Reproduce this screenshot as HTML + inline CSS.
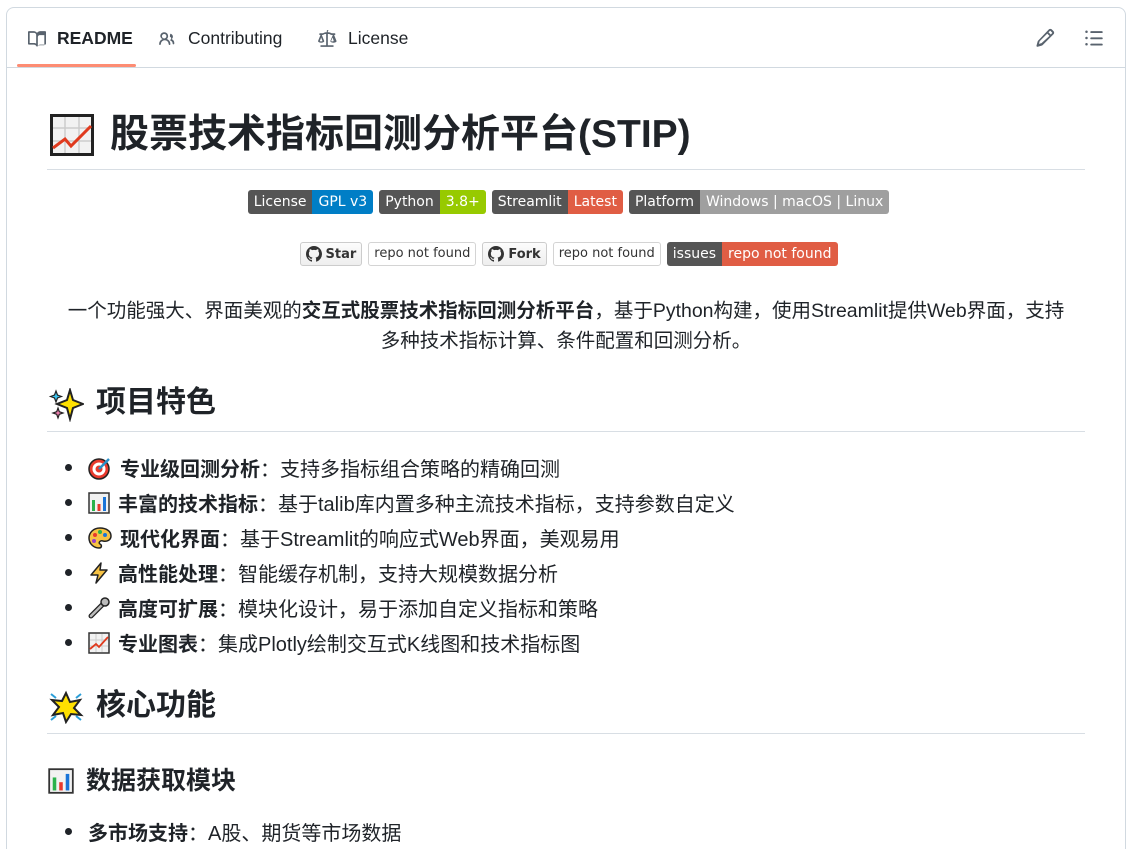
<!DOCTYPE html>
<html><head><meta charset="utf-8"><style>
*{margin:0;padding:0;box-sizing:border-box}
html,body{width:1137px;height:849px;overflow:hidden}
body{background:#fff;font-family:"Liberation Sans","Noto Sans CJK SC",sans-serif;color:#1f2328;position:relative}
.box{position:absolute;left:6px;top:7px;width:1120px;height:842px;border:1px solid #d1d9e0;border-bottom:none;border-radius:8px 8px 0 0}
.tabs{position:absolute;left:6px;top:7px;width:1120px;height:61px;border-bottom:1px solid #d1d9e0}
.tab{position:absolute;top:28px;font-size:17.5px;display:flex;align-items:center;gap:10px;color:#1f2328}
.ul{position:absolute;left:17px;top:64px;width:119px;height:3px;background:#fd8c73;border-radius:2px}
.a{position:absolute;white-space:nowrap}
.hr{position:absolute;left:47px;width:1038px;height:1px;background:#d8dee4}
h1,h2,h3{font-weight:700}
.badges{position:absolute;left:0;width:1137px;display:flex;justify-content:center;gap:6px;font-family:"DejaVu Sans","Liberation Sans",sans-serif;font-size:14px;color:#fff}
.b{display:flex;height:24px;border-radius:3px;overflow:hidden}
.b span{padding:0 6px;line-height:24px}
.g{background:#555}
.gh{display:flex;height:24px;font-size:13px;color:#333;font-weight:700;align-items:center}
.gh .l{border:1px solid #ccc;border-radius:3px;background:linear-gradient(#fcfcfc,#eee);height:24px;padding:0 5px;display:flex;align-items:center;gap:4px}
.gh .r{border:1px solid #d4d4d4;border-radius:3px;background:#fff;height:24px;padding:0 5px;line-height:22px;margin-left:6px;font-weight:400}
p.c{position:absolute;left:52px;width:1028px;text-align:center;font-size:19.5px;line-height:30px}
.li{position:absolute;left:65px;font-size:20px;display:flex;align-items:center;white-space:nowrap}
.li:before{content:"";width:7px;height:7px;border-radius:50%;background:#1f2328;margin-right:16px}
.li svg{margin-right:8px}
</style></head><body>
<div class="box"></div>
<div class="tabs"></div>
<div class="tab" style="left:27px;font-weight:700"><svg width="20" height="18" viewBox="0 0 16 16" fill="#59636e"><path d="M0 1.75A.75.75 0 0 1 .75 1h4.25c1.2 0 2.3.6 3 1.5C8.7 1.6 9.8 1 11 1h4.250a.75.75 0 0 1 .75.75v10.5a.75.75 0 0 1-.75.75H10.8c-.9 0-1.7.5-2.1 1.3a.75.75 0 0 1-1.3 0C7 13.5 6.1 13 5.2 13H.75A.75.75 0 0 1 0 12.25Zm7.25 2.5c0-1-.8-1.75-1.75-1.75H1.5v9h3.7c.8 0 1.5.2 2.050.6Zm1.5 9.85c.6-.4 1.3-.6 2.050-.6h3.7v-9H10.5c-1 0-1.75.8-1.75 1.75Z"/></svg>README</div>
<div class="tab" style="left:156px"><svg width="22" height="18" viewBox="0 0 16 16" fill="#59636e"><path d="M2 5.5a3.5 3.5 0 1 1 5.9 2.5 5 5 0 0 1 3.1 4.5.75.75 0 0 1-1.5.1 3.5 3.5 0 0 0-7 0 .75.75 0 0 1-1.5-.1 5 5 0 0 1 3.1-4.5A3.5 3.5 0 0 1 2 5.5ZM5.5 3.5a2 2 0 1 0 0 4 2 2 0 0 0 0-4Zm5.3.3a.75.75 0 0 1 1-.3 2.75 2.75 0 0 1 .4 4.6A4 4 0 0 1 14.5 12a.75.75 0 0 1-1.5 0 2.5 2.5 0 0 0-1.6-2.3.75.75 0 0 1-.2-1.3 1.25 1.25 0 0 0-.3-2.2.75.75 0 0 1-.3-1Z"/></svg>Contributing</div>
<div class="tab" style="left:316px"><svg width="22" height="18" viewBox="0 0 16 16" fill="#59636e"><path d="M8.75.75V2h.99c.3 0 .6.1.9.2l1.3.6c.1.1.2.1.3.1h2.5a.75.75 0 0 1 0 1.5h-.4l2.1 5.3a.75.75 0 0 1-.3.9c-.6.4-1.4.7-2.4.7s-1.8-.3-2.4-.7a.75.75 0 0 1-.3-.9l2.1-5.3H12.2c-.3 0-.6-.1-.9-.2L10 3.6c-.1-.1-.2-.1-.3-.1h-.95v10h4.5a.75.75 0 0 1 0 1.5H2.75a.75.75 0 0 1 0-1.5h4.5v-10h-.95c-.1 0-.2 0-.3.1l-1.3.6c-.3.1-.6.2-.9.2H3.4l2.1 5.3a.75.75 0 0 1-.3.9c-.6.4-1.4.7-2.4.7s-1.8-.3-2.4-.7a.75.75 0 0 1-.3-.9L2.2 4.4h-.4a.75.75 0 0 1 0-1.5h2.5c.1 0 .2 0 .3-.1l1.3-.6c.3-.1.6-.2.9-.2h.99V.75a.75.75 0 0 1 1.5 0ZM1.6 9.9c.3.1.6.2 1.2.2s.9-.1 1.2-.2L2.8 6.7Zm10 0c.3.1.6.2 1.2.2s.9-.1 1.2-.2L13 6.7Z"/></svg>License</div>
<div class="ul"></div>
<svg class="a" style="left:1035px;top:28px" width="20" height="20" viewBox="0 0 16 16" fill="#59636e"><path d="M11 1.2a1.75 1.75 0 0 1 2.5 0l1.3 1.3a1.75 1.75 0 0 1 0 2.5l-8.6 8.6c-.2.2-.5.4-.8.5l-3.3.9a.75.75 0 0 1-.9-.9l.9-3.3c.1-.3.3-.6.5-.8Zm1.4 1.1a.25.25 0 0 0-.4 0L10.8 3.4l1.8 1.8 1.1-1.1a.25.25 0 0 0 0-.4ZM11.6 6.3 9.8 4.5 3.8 10.5c-.03.03-.05.07-.06.1l-.6 2.1 2.1-.6.1-.06Z"/></svg>
<svg class="a" style="left:1084px;top:28px" width="20" height="20" viewBox="0 0 16 16" fill="#59636e"><path d="M5.75 2.5h8.5a.75.75 0 0 1 0 1.5h-8.5a.75.75 0 0 1 0-1.5Zm0 5h8.5a.75.75 0 0 1 0 1.5h-8.5a.75.75 0 0 1 0-1.5Zm0 5h8.5a.75.75 0 0 1 0 1.5h-8.5a.75.75 0 0 1 0-1.5ZM2 14a1 1 0 1 1 0-2 1 1 0 0 1 0 2Zm1-6a1 1 0 1 1-2 0 1 1 0 0 1 2 0ZM2 4a1 1 0 1 1 0-2 1 1 0 0 1 0 2Z"/></svg>

<svg class="a" style="left:50px;top:114px" width="44" height="42" viewBox="0 0 44 42"><rect x="1.5" y="1.5" width="41" height="39" fill="#f2f2f2" stroke="#222" stroke-width="3"/><path d="M15 3v36M29 3v36M3 14h38M3 27h38" stroke="#ccc" stroke-width="1.5"/><path d="M3 34l12-9 6 7 20-20" stroke="#e03a1e" stroke-width="3" fill="none"/></svg>
<h1 class="a" style="left:110px;top:109px;font-size:39px;line-height:52px">股票技术指标回测分析平台(STIP)</h1>
<div class="hr" style="top:169px"></div>

<div class="badges" style="top:190px">
<div class="b"><span class="g">License</span><span style="background:#007ec6">GPL v3</span></div>
<div class="b"><span class="g">Python</span><span style="background:#97ca00">3.8+</span></div>
<div class="b"><span class="g">Streamlit</span><span style="background:#e05d44">Latest</span></div>
<div class="b"><span class="g">Platform</span><span style="background:#9f9f9f">Windows | macOS | Linux</span></div>
</div>
<div class="badges" style="top:242px">
<div class="gh"><div class="l"><svg width="16" height="16" viewBox="0 0 16 16" fill="#333"><path d="M8 0C3.6 0 0 3.6 0 8c0 3.5 2.3 6.5 5.5 7.6.4.1.5-.2.5-.4v-1.4c-2.2.5-2.7-1-2.7-1-.4-.9-.9-1.2-.9-1.2-.7-.5.1-.5.1-.5.8.1 1.2.8 1.2.8.7 1.2 1.9.9 2.3.7.1-.5.3-.9.5-1.1-1.8-.2-3.6-.9-3.6-4 0-.9.3-1.6.8-2.1-.1-.2-.4-1 .1-2.1 0 0 .7-.2 2.2.8a7.4 7.4 0 0 1 4 0c1.5-1 2.2-.8 2.2-.8.4 1.1.2 1.9.1 2.1.5.6.8 1.3.8 2.1 0 3.1-1.9 3.8-3.6 4 .3.3.6.8.6 1.5v2.2c0 .2.1.5.6.4A8 8 0 0 0 16 8c0-4.4-3.6-8-8-8Z"/></svg>Star</div><div class="r">repo not found</div></div>
<div class="gh"><div class="l"><svg width="16" height="16" viewBox="0 0 16 16" fill="#333"><path d="M8 0C3.6 0 0 3.6 0 8c0 3.5 2.3 6.5 5.5 7.6.4.1.5-.2.5-.4v-1.4c-2.2.5-2.7-1-2.7-1-.4-.9-.9-1.2-.9-1.2-.7-.5.1-.5.1-.5.8.1 1.2.8 1.2.8.7 1.2 1.9.9 2.3.7.1-.5.3-.9.5-1.1-1.8-.2-3.6-.9-3.6-4 0-.9.3-1.6.8-2.1-.1-.2-.4-1 .1-2.1 0 0 .7-.2 2.2.8a7.4 7.4 0 0 1 4 0c1.5-1 2.2-.8 2.2-.8.4 1.1.2 1.9.1 2.1.5.6.8 1.3.8 2.1 0 3.1-1.9 3.8-3.6 4 .3.3.6.8.6 1.5v2.2c0 .2.1.5.6.4A8 8 0 0 0 16 8c0-4.4-3.6-8-8-8Z"/></svg>Fork</div><div class="r">repo not found</div></div>
<div class="b"><span class="g">issues</span><span style="background:#e05d44">repo not found</span></div>
</div>

<p class="c" style="top:296px">一个功能强大、界面美观的<b>交互式股票技术指标回测分析平台</b>，基于Python构建，使用Streamlit提供Web界面，支持<br>多种技术指标计算、条件配置和回测分析。</p>

<svg class="a" style="left:48px;top:388px" width="36" height="34" viewBox="0 0 36 34"><path d="M22 2l3 10 10 4-10 4-3 11-3-11-10-4 10-4z" fill="#ffe000" stroke="#222" stroke-width="2"/><path d="M8 3l1.5 4 4 1.5-4 1.5L8 14l-1.5-4-4-1.5 4-1.5z" fill="#3cc4f0" stroke="#222" stroke-width="1.2"/><path d="M10 20l1.3 3.7 3.7 1.3-3.7 1.3L10 30l-1.3-3.7-3.7-1.3 3.7-1.3z" fill="#f080b0" stroke="#222" stroke-width="1.2"/></svg>
<h2 class="a" style="left:96px;top:383px;font-size:30px;line-height:40px">项目特色</h2>
<div class="hr" style="top:431px"></div>

<div class="li" style="top:453px"><svg width="24" height="24" viewBox="0 0 24 24"><circle cx="11" cy="13" r="10" fill="#e8392d" stroke="#222" stroke-width="1.5"/><circle cx="11" cy="13" r="6.5" fill="#fff"/><circle cx="11" cy="13" r="3.5" fill="#e8392d"/><path d="M11 13L21 3" stroke="#2a8ec8" stroke-width="2.5"/></svg><b>专业级回测分析</b>：支持多指标组合策略的精确回测</div>
<div class="li" style="top:488px"><svg width="22" height="22" viewBox="0 0 22 22"><rect x="1" y="1" width="20" height="20" fill="#f2f2f2" stroke="#333" stroke-width="1.5"/><rect x="4" y="8" width="3" height="11" fill="#2bb24c"/><rect x="9.5" y="12" width="3" height="7" fill="#e8392d"/><rect x="15" y="5" width="3" height="14" fill="#1a74d8"/></svg><b>丰富的技术指标</b>：基于talib库内置多种主流技术指标，支持参数自定义</div>
<div class="li" style="top:523px"><svg width="24" height="22" viewBox="0 0 24 22"><path d="M12 1C5 1 1 6 1 11c0 6 5 10 10 10 3 0 3-3 1-4-2-1 0-4 3-3 4 1 8-1 8-5 0-5-5-8-11-8z" fill="#f6c244" stroke="#222" stroke-width="1.5"/><circle cx="7" cy="8" r="2" fill="#e8392d"/><circle cx="12" cy="5" r="2" fill="#2bb24c"/><circle cx="17" cy="8" r="2" fill="#1a74d8"/><circle cx="6" cy="14" r="2" fill="#9b3fc8"/></svg><b>现代化界面</b>：基于Streamlit的响应式Web界面，美观易用</div>
<div class="li" style="top:558px"><svg width="22" height="22" viewBox="0 0 22 22"><path d="M13 1L3 13h7l-2 8 11-13h-7z" fill="#f6c244" stroke="#222" stroke-width="1.5" stroke-linejoin="round"/></svg><b>高性能处理</b>：智能缓存机制，支持大规模数据分析</div>
<div class="li" style="top:593px"><svg width="22" height="22" viewBox="0 0 22 22"><path d="M3 19L15 7" stroke="#222" stroke-width="5" stroke-linecap="round"/><path d="M3 19L15 7" stroke="#bbb" stroke-width="2.5" stroke-linecap="round"/><circle cx="17" cy="5" r="4" fill="#bbb" stroke="#222" stroke-width="1.5"/></svg><b>高度可扩展</b>：模块化设计，易于添加自定义指标和策略</div>
<div class="li" style="top:628px"><svg width="22" height="22" viewBox="0 0 22 22"><rect x="1" y="1" width="20" height="20" fill="#f2f2f2" stroke="#333" stroke-width="1.5"/><path d="M8 2v18M14 2v18M2 8h18M2 14h18" stroke="#ccc"/><path d="M2 17l6-5 3 3 9-10" stroke="#e03a1e" stroke-width="1.8" fill="none"/></svg><b>专业图表</b>：集成Plotly绘制交互式K线图和技术指标图</div>

<svg class="a" style="left:48px;top:690px" width="36" height="34" viewBox="0 0 36 34"><path d="M18 3l4 9 10-2-6 8 7 7-10-1-5 8-3-9-10 2 6-8-7-7 10 1z" fill="#ffe000" stroke="#222" stroke-width="2"/><path d="M3 4l5 4M33 4l-5 4M3 30l5-4M33 30l-5-4" stroke="#2a9ed8" stroke-width="2"/></svg>
<h2 class="a" style="left:96px;top:686px;font-size:30px;line-height:40px">核心功能</h2>
<div class="hr" style="top:733px"></div>

<svg class="a" style="left:48px;top:768px" width="26" height="26" viewBox="0 0 22 22"><rect x="1" y="1" width="20" height="20" fill="#f2f2f2" stroke="#333" stroke-width="1.5"/><rect x="4" y="8" width="3" height="11" fill="#2bb24c"/><rect x="9.5" y="12" width="3" height="7" fill="#e8392d"/><rect x="15" y="5" width="3" height="14" fill="#1a74d8"/></svg>
<h3 class="a" style="left:86px;top:764px;font-size:25px;line-height:34px">数据获取模块</h3>
<div class="li" style="top:817px"><b>多市场支持</b>：A股、期货等市场数据</div>
</body></html>
